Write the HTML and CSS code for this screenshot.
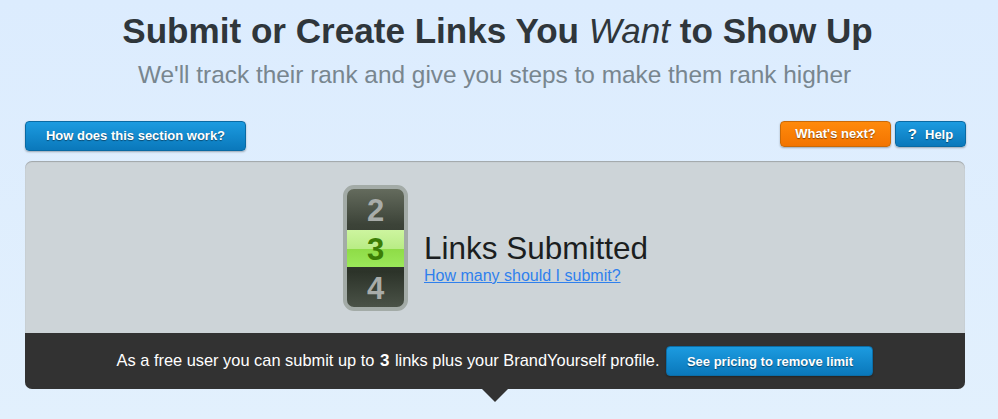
FILE: index.html
```html
<!DOCTYPE html>
<html lang="en">
<head>
    <meta charset="UTF-8">
    <title>Submit or Create Links</title>
    <link rel="stylesheet" href="styles.css">
</head>
<body>
    <!-- Encabezado -->
    <h1 class="titulo">Submit or Create Links You <em>Want</em> to Show Up</h1>
    <p class="subtitulo">We'll track their rank and give you steps to make them rank higher</p>

    <!-- Botones -->
    <div class="barra">
        <a class="boton azul ancho">How does this section work?</a>
        <div class="derecha">
            <a class="boton naranja siguiente">What's next?</a>
            <a class="boton azul ayuda"><span class="interrogante">?</span>Help</a>
        </div>
    </div>

    <!-- Panel -->
    <div class="panel">
        <div class="contador-zona">
            <div class="contador">
                <div class="digito">2</div>
                <div class="digito activo">3</div>
                <div class="digito">4</div>
            </div>
            <div class="contador-texto">
                <div class="etiqueta">Links Submitted</div>
                <a class="enlace">How many should I submit?</a>
            </div>
        </div>
        <div class="aviso">
            <span>As a free user you can submit up to <b>3</b> links plus your BrandYourself profile.</span>
            <a class="boton azul precio">See pricing to remove limit</a>
            <div class="flecha"></div>
        </div>
    </div>
</body>
</html>
```

FILE: styles.css
```css
body {
    margin: 0;
    height: 419px;
    overflow: hidden;
    background: linear-gradient(to bottom, #dcecfe, #e2f0fd);
    font-family: "Liberation Sans", Arial, sans-serif;
}

/* Encabezado */
.titulo {
    margin: 0;
    padding: 11px 3px 0 0;
    text-align: center;
    font-size: 35.1px;
    line-height: 40px;
    font-weight: bold;
    color: #2f363b;
}

.titulo em {
    font-weight: normal;
}

.subtitulo {
    margin: 9px 9px 0 0;
    text-align: center;
    font-size: 24.4px;
    line-height: 30px;
    color: #78868f;
}

/* Botones */
.barra {
    display: flex;
    justify-content: space-between;
    align-items: flex-start;
    margin: 31px 32px 0 25px;
}

.derecha {
    display: flex;
    gap: 4px;
}

.boton {
    display: block;
    box-sizing: border-box;
    border: 1px solid #0a6aa3;
    border-radius: 4px;
    color: #fff;
    font-size: 13px;
    font-weight: bold;
    text-align: center;
    text-shadow: 0 1px 1px rgba(0, 0, 0, 0.45);
    box-shadow: 0 1px 2px rgba(0, 0, 0, 0.3);
}

.azul {
    background: linear-gradient(to bottom, #1c9be0, #0a78bb);
}

.naranja {
    border-color: #c96a08;
    background: linear-gradient(to bottom, #ff8a0c, #f37400);
}

.ancho {
    width: 221px;
    height: 30px;
    line-height: 28px;
}

.siguiente {
    width: 111px;
    height: 26px;
    line-height: 24px;
}

.ayuda {
    width: 71px;
    height: 26px;
    line-height: 24px;
}

.interrogante {
    margin-right: 8px;
    font-size: 15px;
}

.precio {
    width: 207px;
    height: 30px;
    line-height: 29px;
    border-color: #0b6ea8;
}

/* Panel */
.panel {
    position: relative;
    margin: 10px 33px 0 25px;
    border-radius: 7px;
    background: #cdd4d8;
    box-shadow: inset 0 1px 1px rgba(0, 0, 0, 0.22);
}

.contador-zona {
    display: flex;
    align-items: center;
    height: 172px;
    padding: 2px 0 0 318px;
    box-sizing: border-box;
}

/* Contador */
.contador {
    box-sizing: border-box;
    width: 65px;
    height: 126px;
    border: 4px solid #a3aba7;
    border-radius: 11px;
    overflow: hidden;
    background: linear-gradient(to bottom, #646b5d 0, #3c4338 30%, #2c3329 70%, #4a5247 100%);
}

.digito {
    height: 41px;
    line-height: 43px;
    text-align: center;
    font-size: 31px;
    font-weight: bold;
    color: #a8aca9;
}

.digito.activo {
    height: 37px;
    line-height: 39px;
    color: #3c7d06;
    background: linear-gradient(to bottom, #cdf59f 0, #b9ec86 50%, #8fdc47 52%, #9be85a 100%);
}

.contador-texto {
    margin: 20px 0 0 16px;
}

.etiqueta {
    font-size: 31.5px;
    line-height: 34px;
    color: #1b1e20;
}

.enlace {
    display: block;
    margin-top: 2px;
    font-size: 16px;
    line-height: 18px;
    color: #2f80ed;
    text-decoration: underline;
}

/* Aviso inferior */
.aviso {
    position: relative;
    display: flex;
    align-items: center;
    justify-content: center;
    gap: 7px;
    height: 56px;
    border-radius: 0 0 7px 7px;
    background: #323232;
    color: #fff;
    font-size: 16.4px;
}

.aviso b {
    font-size: 17px;
    margin: 0 1px;
}

.flecha {
    position: absolute;
    left: 457px;
    bottom: -13px;
    border-left: 13px solid transparent;
    border-right: 13px solid transparent;
    border-top: 13px solid #323232;
}
```
